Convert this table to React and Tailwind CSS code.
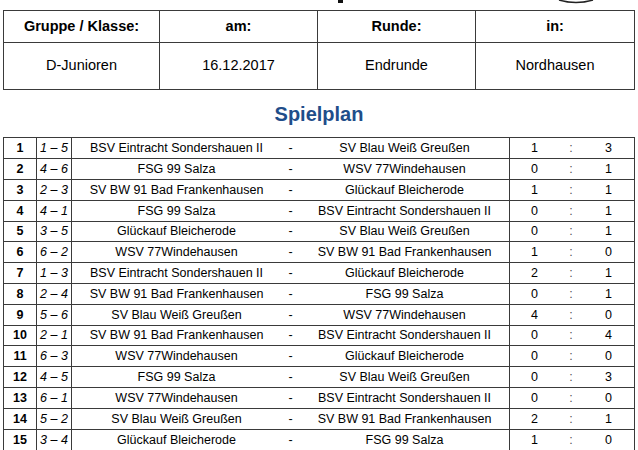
const games = [
  ["1", "1 – 5", "BSV Eintracht Sondershauen II", "SV Blau Weiß Greußen", "1", "3"],
  ["2", "4 – 6", "FSG 99 Salza", "WSV 77Windehausen", "0", "1"],
  ["3", "2 – 3", "SV BW 91 Bad Frankenhausen", "Glückauf Bleicherode", "1", "1"],
  ["4", "4 – 1", "FSG 99 Salza", "BSV Eintracht Sondershauen II", "0", "1"],
  ["5", "3 – 5", "Glückauf Bleicherode", "SV Blau Weiß Greußen", "0", "1"],
  ["6", "6 – 2", "WSV 77Windehausen", "SV BW 91 Bad Frankenhausen", "1", "0"],
  ["7", "1 – 3", "BSV Eintracht Sondershauen II", "Glückauf Bleicherode", "2", "1"],
  ["8", "2 – 4", "SV BW 91 Bad Frankenhausen", "FSG 99 Salza", "0", "1"],
  ["9", "5 – 6", "SV Blau Weiß Greußen", "WSV 77Windehausen", "4", "0"],
  ["10", "2 – 1", "SV BW 91 Bad Frankenhausen", "BSV Eintracht Sondershauen II", "0", "4"],
  ["11", "6 – 3", "WSV 77Windehausen", "Glückauf Bleicherode", "0", "0"],
  ["12", "4 – 5", "FSG 99 Salza", "SV Blau Weiß Greußen", "0", "3"],
  ["13", "6 – 1", "WSV 77Windehausen", "BSV Eintracht Sondershauen II", "0", "0"],
  ["14", "5 – 2", "SV Blau Weiß Greußen", "SV BW 91 Bad Frankenhausen", "2", "1"],
  ["15", "3 – 4", "Glückauf Bleicherode", "FSG 99 Salza", "1", "0"],
];

const info = [
  ["Gruppe / Klasse:", "D-Junioren"],
  ["am:", "16.12.2017"],
  ["Runde:", "Endrunde"],
  ["in:", "Nordhausen"],
];

export default function App() {
  return (
    <div className="w-[638px] h-[450px] overflow-hidden bg-white text-black font-['Liberation_Sans',Arial,sans-serif]">
      {/* cut off title + logo from the page above */}
      <svg width="638" height="10" className="block">
        <rect x="338" y="0" width="5" height="3" fill="#111" />
        <path d="M559 0 Q576 5 593 0" stroke="#222" strokeWidth="1.5" fill="none" />
      </svg>

      <div className="ml-[3px] w-[632px] grid grid-cols-[156px_158px_158px_1fr] border-l border-t border-[#3a3a3a]">
        {info.map(([label]) => (
          <div key={label} className="h-[32px] flex items-center justify-center border-r border-b border-[#3a3a3a] text-[14.5px] font-bold">
            {label}
          </div>
        ))}
        {info.map(([label, value]) => (
          <div key={label + "v"} className="h-[47px] flex items-center justify-center border-r border-b border-[#3a3a3a] text-[14.5px]">
            {value}
          </div>
        ))}
      </div>

      <div className="h-[47px] flex items-center justify-center pt-[1px]">
        <span className="text-[20px] font-bold text-[#1f4e8a]">Spielplan</span>
      </div>

      <div className="ml-[3px] w-[632px] border-l border-t border-[#3a3a3a]">
        {games.map(([nr, pair, home, away, g1, g2], i) => (
          <div
            key={nr}
            className={`grid grid-cols-[33px_35px_209px_19px_210px_1fr] border-b border-[#3a3a3a] text-[12.5px] ${i === 14 ? "h-[24px] pb-[2px]" : i % 5 === 4 ? "h-[20px]" : "h-[21px]"}`}
          >
            <div className="flex items-center justify-center border-r border-[#3a3a3a] font-bold">{nr}</div>
            <div className="flex items-center justify-center border-r border-[#3a3a3a] italic">{pair}</div>
            <div className="flex items-center justify-center whitespace-nowrap">{home}</div>
            <div className="flex items-center justify-center">-</div>
            <div className="flex items-center justify-center whitespace-nowrap border-r border-[#3a3a3a]">{away}</div>
            <div className="grid grid-cols-[49px_24px_1fr] border-r border-[#3a3a3a]">
              <div className="flex items-center justify-center">{g1}</div>
              <div className="flex items-center justify-center text-[#555]">:</div>
              <div className="flex items-center justify-center">{g2}</div>
            </div>
          </div>
        ))}
      </div>
    </div>
  );
}
